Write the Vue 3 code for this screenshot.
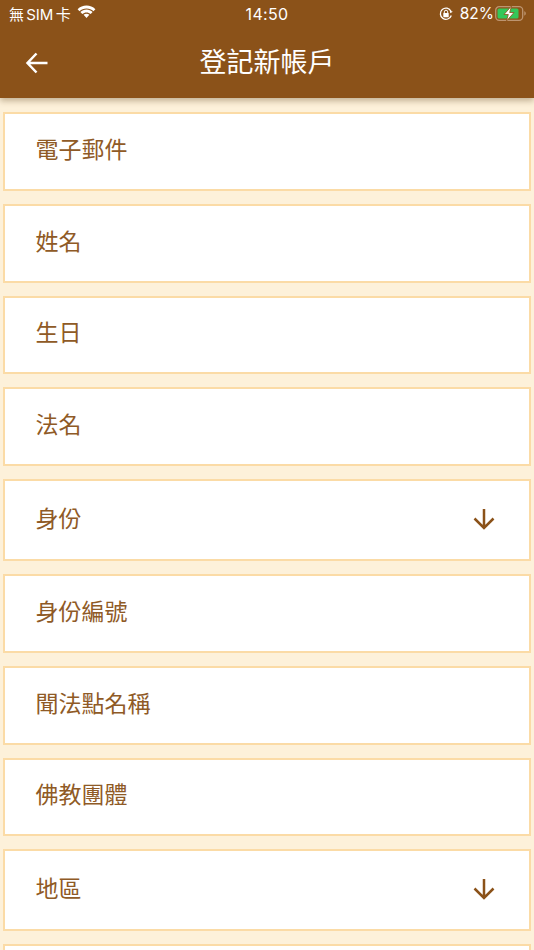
<script setup>
const fields = [
  { label: '電子郵件' },
  { label: '姓名' },
  { label: '生日' },
  { label: '法名' },
  { label: '身份', select: true },
  { label: '身份編號' },
  { label: '聞法點名稱' },
  { label: '佛教團體' },
  { label: '地區', select: true },
  { label: '' },
]
</script>

<template>
  <div class="screen">
    <header class="header">
      <div class="status">
        <div class="status-left">
          <span class="carrier">無 SIM 卡</span>
          <svg class="wifi" width="21" height="15" viewBox="0 0 20 15">
            <path d="M10 3.400c2.700 0 5.100 1 7 2.800l1.900-2C16.500 1.900 13.400.6 10 .6S3.500 1.900 1.100 4.200l1.900 2c1.900-1.800 4.300-2.800 7-2.800z" fill="#fff"/>
            <path d="M10 7.400c1.600 0 3 .6 4.200 1.600l1.900-2C14.500 5.500 12.300 4.600 10 4.600S5.500 5.500 3.900 7l1.900 2C7 8 8.400 7.400 10 7.400z" fill="#fff"/>
            <path d="M10 8.700c-1.100 0-2.100.4-2.900 1.100l2.900 3.200 2.900-3.200c-.8-.7-1.800-1.100-2.900-1.100z" fill="#fff"/>
          </svg>
        </div>
        <span class="time">14:50</span>
        <div class="status-right">
          <svg class="lock" width="16" height="16" viewBox="0 0 16 16" fill="none">
            <path d="M13.300 9.500A5.600 5.600 0 1 1 13 5.200" stroke="#fff" stroke-width="1.300"/>
            <path d="M14.800 5.800 12.300 7.200 11.800 4.600z" fill="#fff"/>
            <rect x="5.300" y="7" width="5.400" height="4.200" rx=".6" fill="#fff"/>
            <path d="M6.300 7V5.900a1.700 1.700 0 0 1 3.400 0V7" stroke="#fff" stroke-width="1"/>
          </svg>
          <span class="percent">82%</span>
          <svg class="battery" width="32" height="17" viewBox="0 0 32 17" fill="none">
            <rect x=".7" y="1.700" width="27" height="13.600" rx="3.500" stroke="#bd9570" stroke-width="1.300"/>
            <path d="M29.300 6.300v4.400c.9-.3 1.500-1.200 1.500-2.200s-.6-1.900-1.500-2.200z" fill="#bd9570"/>
            <rect x="2.500" y="3.500" width="21" height="10" rx="1.500" fill="#34c759"/>
            <path d="M16.500 1 9 9.500h4.300L11.500 16 19 7.500h-4.300z" fill="#fff" stroke="#8b5219" stroke-width=".8"/>
          </svg>
        </div>
      </div>
      <div class="toolbar">
        <svg class="back" width="24" height="24" viewBox="0 0 24 24" fill="none">
          <path d="M22.500 12H2.500M11.500 2.500 2.500 12l9 9.500" stroke="#fff" stroke-width="2.500"/>
        </svg>
        <h1 class="title">登記新帳戶</h1>
      </div>
    </header>

    <main class="form">
      <div
        v-for="(field, i) in fields"
        :key="i"
        class="field"
        :class="{ 'field-select': field.select }"
      >
        <span class="label">{{ field.label }}</span>
        <svg v-if="field.select" class="arrow" width="22" height="22" viewBox="0 0 22 22" fill="none">
          <path d="M11 1v19M1.500 10.500 11 20l9.500-9.500" stroke="#8b5219" stroke-width="2.500"/>
        </svg>
      </div>
    </main>
  </div>
</template>

<style scoped>
.screen {
  width: 534px;
  height: 950px;
  overflow: hidden;
  background: #fdf1da;
  font-family: "Noto Sans CJK TC", "Noto Sans", sans-serif;
}
.header {
  position: relative;
  z-index: 1;
  height: 98px;
  background: #8b5219;
  box-shadow: 0 3px 6px rgba(90, 60, 20, 0.35);
  color: #fff;
}
.status {
  height: 27px;
  padding: 0 7px 0 9px;
  display: grid;
  grid-template-columns: 1fr auto 1fr;
  align-items: center;
  font-family: "Inter", "Noto Sans CJK TC", sans-serif;
}
.status-left {
  display: flex;
  align-items: center;
  gap: 5px;
}
.carrier {
  font-size: 15px;
  word-spacing: -2px;
}
.wifi {
  margin-top: -2px;
}
.time {
  font-size: 16px;
  letter-spacing: 0.3px;
  margin-left: -2px;
}
.status-right {
  display: flex;
  align-items: center;
  justify-content: flex-end;
  gap: 6px;
}
.percent {
  font-size: 15.500px;
  margin-right: -5px;
}
.toolbar {
  height: 71px;
  padding: 0 0 7px 25px;
  display: flex;
  align-items: center;
  position: relative;
}
.title {
  margin: 0;
  position: absolute;
  left: 0;
  right: 0;
  top: 11px;
  text-align: center;
  font-size: 27px;
  line-height: 46px;
  font-weight: 400;
}
.form {
  padding: 14px 3px 0;
  display: flex;
  flex-direction: column;
  gap: 13px;
}
.field {
  box-sizing: border-box;
  flex: none;
  height: 78.750px;
  padding: 0 35px 7px 31px;
  display: flex;
  align-items: center;
  justify-content: space-between;
  background: #fff;
  border: 2px solid #fbdba6;
}
.field-select {
  height: 82px;
}
.label {
  color: #8f5a26;
  font-size: 23px;
  line-height: 34px;
  margin-left: -0.500px;
}
.arrow {
  margin-right: -1px;
  margin-top: 5px;
}
</style>
